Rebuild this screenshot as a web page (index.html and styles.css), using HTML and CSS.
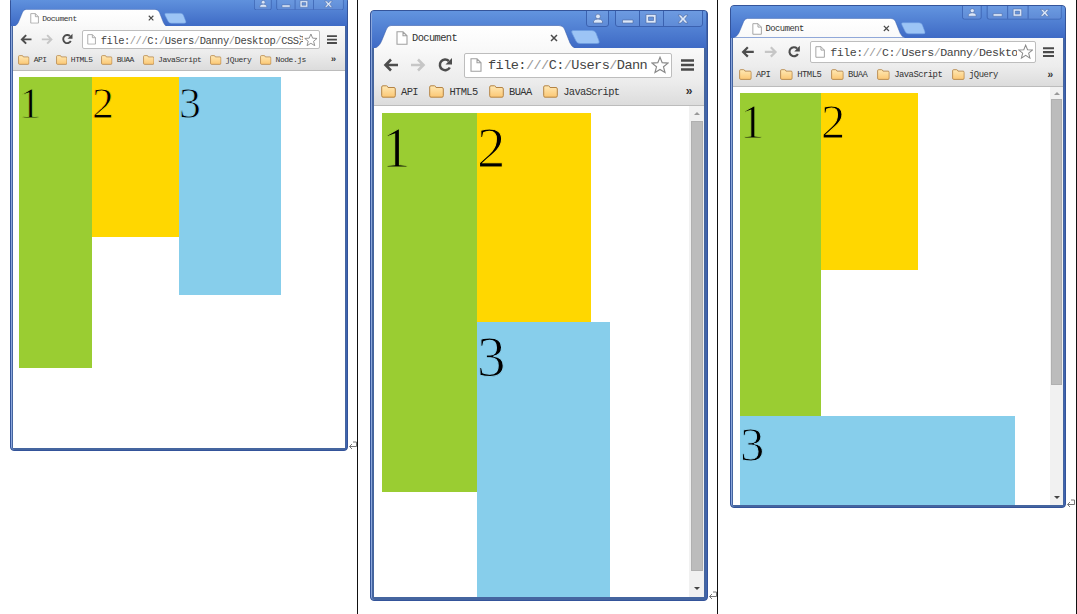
FILE: index.html
```html
<!DOCTYPE html>
<html lang="en">
<head>
<meta charset="utf-8">
<title>Document</title>
<link rel="stylesheet" href="styles.css">
</head>
<body>
<svg class="defs" aria-hidden="true">
  <defs>
    <linearGradient id="folderFill" x1="0" y1="0" x2="0" y2="1"><stop offset="0" stop-color="#ffe9b5"/><stop offset="1" stop-color="#fbc774"/></linearGradient>
    <linearGradient id="tabFill" x1="0" y1="0" x2="0" y2="1"><stop offset="0" stop-color="#ffffff"/><stop offset="1" stop-color="#f9f9f9"/></linearGradient>
  </defs>
  <symbol id="tab" viewBox="0 0 228 23">
    <path d="M0 23.5C4 22 6 20 8 15L12.500 4Q14 .5 17 .5H185Q189 .5 190.500 4L196 18Q198 22.500 202 23.500Z" fill="url(#tabFill)" stroke="#3c62ad" stroke-width=".6"/>
    <path d="M199 5.500H218Q221 5.500 222 8L225 16Q226 18.500 223 18.500H206Q203 18.500 202 16L198 8Q197 5.500 199 5.500Z" fill="#9cc4f5" stroke="#6f9de0" stroke-width=".7"/>
  </symbol>
  <symbol id="controls" viewBox="0 0 117 16">
    <path d="M.5 0V13Q.5 15.500 3 15.500H20Q22.500 15.500 22.500 13V0M29.500 0V13Q29.500 15.500 32 15.500H114Q116.500 15.500 116.500 13V0M53.500 0V15M77.500 0V15" fill="#ffffff12" stroke="#3b62b0"/>
    <g fill="#dbe7f9" stroke="#4a659c" stroke-width=".6">
      <circle cx="12" cy="5.500" r="2.400"/><path d="M7.500 12V10Q9 8 12 8T16.500 10V12Z"/>
      <path d="M36.500 9H47V12H36.500Z"/>
      <path fill-rule="evenodd" d="M60 3.500H70V12H60ZM62.500 6V9.500H67.500V6Z"/>
      <path d="M92 4H95L97 6.500 99 4H102L98.700 8 102 12H99L97 9.500 95 12H92L95.300 8Z"/>
    </g>
  </symbol>
  <symbol id="page" viewBox="0 0 12 14">
    <path d="M1 .8H7L11 4.800V13.200H1ZM7 .8V4.800H11" fill="#fff" stroke="#a0a0a0" stroke-width="1.100"/>
  </symbol>
  <symbol id="back" viewBox="0 0 16 14">
    <path d="M15 7H3M8 1.500L2.500 7L8 12.500" fill="none" stroke="currentColor" stroke-width="2.600"/>
  </symbol>
  <symbol id="reload" viewBox="0 0 16 16">
    <path d="M12.800 10.500A5.300 5.300 0 1 1 11.800 4" fill="none" stroke="#4d4d4d" stroke-width="2.500"/><path d="M15 1V7.500H8.500Z" fill="#4d4d4d"/>
  </symbol>
  <symbol id="star" viewBox="0 0 18 18">
    <path d="M9 1.300L11.200 6.700 17 7.100 12.500 10.800 14 16.500 9 13.400 4 16.500 5.500 10.800 1 7.100 6.800 6.700Z" fill="#fff" stroke="#8a8a8a" stroke-width="1.200"/>
  </symbol>
  <symbol id="folder" viewBox="0 0 15 13">
    <path d="M.7 10.700V2Q.7.8 2 .8H5.500Q6.500.8 7 2.500H13Q14.300 2.500 14.300 4V10.700Q14.300 12.200 13 12.200H2Q.7 12.200.7 10.700Z" fill="url(#folderFill)" stroke="#b48445" stroke-width="1"/>
  </symbol>
  <symbol id="close" viewBox="0 0 8 8"><path d="M1 1L7 7M7 1L1 7" stroke="#4b4b4b" stroke-width="1.500"/></symbol>
  <symbol id="menu" viewBox="0 0 13 12"><path d="M0 1.500H13M0 6H13M0 10.500H13" stroke="#4a4a4a" stroke-width="2.500"/></symbol>
  <symbol id="return" viewBox="0 0 10 9"><path d="M5 1H8.500V5.500H1.500M4 3L1.500 5.500L4 8" fill="none" stroke="#777"/></symbol>
</svg>

<main class="table">
  <section class="cell cell-a">
    <div class="window">
      <div class="titlebar">
        <svg class="tab-shape"><use href="#tab"/></svg>
        <div class="tab-label"><svg class="page-icon"><use href="#page"/></svg><span class="small">Document</span><svg class="tab-close"><use href="#close"/></svg></div>
        <svg class="controls"><use href="#controls"/></svg>
      </div>
      <div class="toolbar">
        <svg class="arrow"><use href="#back"/></svg><svg class="arrow forward"><use href="#back"/></svg><svg class="reload"><use href="#reload"/></svg>
        <div class="omnibox"><svg class="page-icon"><use href="#page"/></svg><span class="url">file:<i>///</i>C:<i>/</i>Users<i>/</i>Danny<i>/</i>Desktop<i>/</i>CSS浮</span><svg class="star"><use href="#star"/></svg></div>
        <svg class="menu"><use href="#menu"/></svg>
      </div>
      <div class="bookmarks small">
        <svg><use href="#folder"/></svg><span>API</span><svg><use href="#folder"/></svg><span>HTML5</span><svg><use href="#folder"/></svg><span>BUAA</span><svg><use href="#folder"/></svg><span>JavaScript</span><svg><use href="#folder"/></svg><span>jQuery</span><svg><use href="#folder"/></svg><span>Node.js</span><b class="more">»</b>
      </div>
      <div class="view"><div class="doc"><div class="box one">1</div><div class="box two">2</div><div class="box three">3</div></div></div>
    </div>
    <svg class="return"><use href="#return"/></svg>
  </section>

  <section class="cell cell-b">
    <div class="window">
      <div class="titlebar">
        <svg class="tab-shape"><use href="#tab"/></svg>
        <div class="tab-label"><svg class="page-icon"><use href="#page"/></svg><span class="small">Document</span><svg class="tab-close"><use href="#close"/></svg></div>
        <svg class="controls"><use href="#controls"/></svg>
      </div>
      <div class="toolbar">
        <svg class="arrow"><use href="#back"/></svg><svg class="arrow forward"><use href="#back"/></svg><svg class="reload"><use href="#reload"/></svg>
        <div class="omnibox"><svg class="page-icon"><use href="#page"/></svg><span class="url">file:<i>///</i>C:<i>/</i>Users<i>/</i>Dann</span><svg class="star"><use href="#star"/></svg></div>
        <svg class="menu"><use href="#menu"/></svg>
      </div>
      <div class="bookmarks small">
        <svg><use href="#folder"/></svg><span>API</span><svg><use href="#folder"/></svg><span>HTML5</span><svg><use href="#folder"/></svg><span>BUAA</span><svg><use href="#folder"/></svg><span>JavaScript</span><b class="more">»</b>
      </div>
      <div class="view"><div class="doc"><div class="box one">1</div><div class="box two">2</div><div class="box three">3</div></div>
        <div class="scrollbar"><i class="up"></i><div class="thumb"></div><i class="down"></i></div></div>
    </div>
    <svg class="return"><use href="#return"/></svg>
  </section>

  <section class="cell cell-c">
    <div class="window">
      <div class="titlebar">
        <svg class="tab-shape"><use href="#tab"/></svg>
        <div class="tab-label"><svg class="page-icon"><use href="#page"/></svg><span class="small">Document</span><svg class="tab-close"><use href="#close"/></svg></div>
        <svg class="controls"><use href="#controls"/></svg>
      </div>
      <div class="toolbar">
        <svg class="arrow"><use href="#back"/></svg><svg class="arrow forward"><use href="#back"/></svg><svg class="reload"><use href="#reload"/></svg>
        <div class="omnibox"><svg class="page-icon"><use href="#page"/></svg><span class="url">file:<i>///</i>C:<i>/</i>Users<i>/</i>Danny<i>/</i>Deskto</span><svg class="star"><use href="#star"/></svg></div>
        <svg class="menu"><use href="#menu"/></svg>
      </div>
      <div class="bookmarks small">
        <svg><use href="#folder"/></svg><span>API</span><svg><use href="#folder"/></svg><span>HTML5</span><svg><use href="#folder"/></svg><span>BUAA</span><svg><use href="#folder"/></svg><span>JavaScript</span><svg><use href="#folder"/></svg><span>jQuery</span><b class="more">»</b>
      </div>
      <div class="view"><div class="doc"><div class="box one">1</div><div class="box two">2</div><div class="box three">3</div></div>
        <div class="scrollbar"><i class="up"></i><div class="thumb"></div><i class="down"></i></div></div>
    </div>
    <svg class="return"><use href="#return"/></svg>
  </section>
</main>
</body>
</html>
```
FILE: styles.css
```css
* { box-sizing: border-box; }
body { margin: 0; background: #fff; overflow: hidden; }
svg { display: block; flex: none; }
i { font-style: normal; }
.defs { position: absolute; width: 0; height: 0; }

.table { display: grid; grid-template-columns: 358px 360px 359px; height: 614px; overflow: hidden; }
.cell { display: flex; align-items: flex-start; border-right: 1px solid #111; min-width: 0; overflow: hidden; }

/* --u is one chrome unit; each window is drawn at its own zoom. */
.cell-a { --u: .768px; padding-left: 10px; }
.cell-b { --u: 1px; padding: 10px 0 0 12px; }
.cell-c { --u: .853px; padding: 5px 0 0 12px; }

.window {
  display: flex; flex-direction: column; flex: none; overflow: hidden;
  border: 1px solid #34549a; border-radius: 4px;
  background: #45659f;
  box-shadow: inset 1px 0 #8ba7dc, inset -1px 0 #4065b0;
  padding: 0 2px 2px;
}
.cell-a .window { width: 338px; height: 454px; margin-top: -3px; }
.cell-b .window { width: 338px; height: 591px; padding: 0 3px 3px; }
.cell-c .window { width: 336px; height: 503px; }

.titlebar {
  height: calc(37 * var(--u)); flex: none; margin: 0 -2px; padding: 0 2px;
  background: linear-gradient(#6294df, #3e6ac5);
  display: grid; grid-template-columns: 1fr;
}
.tab-shape { grid-area: 1 / 1; width: calc(228 * var(--u)); height: calc(23 * var(--u)); align-self: end; }
.tab-label {
  grid-area: 1 / 1; justify-self: start; align-self: end; display: flex; align-items: center;
  width: calc(183.5 * var(--u)); height: calc(21 * var(--u)); padding-left: calc(22 * var(--u));
}
.page-icon { width: calc(12 * var(--u)); height: calc(14 * var(--u)); }
.tab-label .small { margin-left: calc(4 * var(--u)); }
.tab-close { width: calc(8 * var(--u)); height: calc(8 * var(--u)); margin-left: auto; }
.controls { grid-area: 1 / 1; justify-self: end; width: calc(117 * var(--u)); height: calc(16 * var(--u)); margin-right: 1px; }

.small {
  font: calc(10.4 * var(--u)) "Liberation Mono", monospace;
  letter-spacing: calc(-.6 * var(--u)); color: #333; white-space: nowrap;
}
.toolbar {
  height: calc(34 * var(--u)); flex: none; display: flex; align-items: center;
  background: linear-gradient(#f9f9f9, #ececec); padding: 0 calc(10 * var(--u)) 0 calc(9 * var(--u));
}
.arrow { width: calc(16 * var(--u)); height: calc(14 * var(--u)); color: #4d4d4d; }
.forward { color: #c6c6c6; transform: scaleX(-1); margin-left: calc(11 * var(--u)); }
.reload { width: calc(16 * var(--u)); height: calc(16 * var(--u)); margin-left: calc(11 * var(--u)); }
.omnibox {
  flex: 1; min-width: 0; display: flex; align-items: center; height: calc(25 * var(--u));
  margin: 0 calc(9 * var(--u)) 0 calc(11 * var(--u)); padding: 0 calc(2 * var(--u)) 0 calc(5 * var(--u));
  border: 1px solid #bdbdbd; border-radius: 2px; background: #fff;
}
.url {
  flex: 1; min-width: 0; overflow: hidden; white-space: nowrap; margin: 0 calc(1 * var(--u)) 0 calc(6 * var(--u));
  font: calc(13.6 * var(--u)) "Liberation Mono", "Noto Sans CJK SC", monospace;
  letter-spacing: calc(-.58 * var(--u)); color: #444;
}
.url i { color: #999; }
.star { width: calc(18 * var(--u)); height: calc(18 * var(--u)); }
.menu { width: calc(13 * var(--u)); height: calc(12 * var(--u)); }

.bookmarks {
  height: calc(24 * var(--u)); flex: none; display: flex; align-items: center;
  padding: 0 calc(12 * var(--u)) calc(4 * var(--u)) calc(7 * var(--u));
  background: linear-gradient(#ececec, #dcdcdc); border-bottom: 1px solid #bcbcbc;
}
.bookmarks svg { width: calc(15 * var(--u)); height: calc(13 * var(--u)); }
.bookmarks span { margin: 0 calc(11.5 * var(--u)) 0 calc(5 * var(--u)); }
.more { margin-left: auto; font-size: calc(12 * var(--u)); }

.view { flex: 1; min-height: 0; display: flex; background: #fff; overflow: hidden; }
.doc { flex: 1; min-width: 0; overflow: hidden; }
.cell-a .doc { padding: 6px; }
.cell-b .doc { padding: 7px 8px 0; }
.cell-c .doc { padding: 6px 7px 0; }
/* A stroke in the box colour slims the numerals. */
.box {
  float: left; color: #000; background: var(--fill);
  font: calc(57 * var(--u)) / calc(69 * var(--u)) "Liberation Serif", serif;
  -webkit-text-stroke: calc(1.1 * var(--u)) var(--fill);
}
.one { --fill: #9acd32; }
.two { --fill: #ffd700; }
.three { --fill: #87ceeb; }
.cell-a .one { width: 73px; height: 291px; }
.cell-a .two { width: 87px; height: 160px; }
.cell-a .three { width: 102px; height: 218px; }
.cell-b .one { width: 95px; height: 379px; }
.cell-b .two { width: 114px; height: 209px; }
.cell-b .three { width: 133px; height: 300px; }
.cell-c .one { width: 81px; height: 323px; }
.cell-c .two { width: 97px; height: 177px; }
.cell-c .three { width: 275px; height: 120px; clear: both; }

.scrollbar {
  width: 15px; flex: none; background: #f1f1f1;
  display: flex; flex-direction: column; align-items: center;
}
.cell-c .scrollbar { width: 13px; }
.thumb { width: calc(12 * var(--u)); background: #bcbcbc; border: 1px solid #b0b0b0; }
.cell-b .thumb { height: 450px; }
.cell-c .thumb { height: 286px; }
.up, .down { border: 3.5px solid transparent; }
.up { border-top: 0; border-bottom-color: #999; margin: calc(6 * var(--u)) 0 6px; }
.cell-c .up { margin-bottom: 4px; }
.down { border-bottom: 0; border-top-color: #444; margin: auto 0 calc(7 * var(--u)); }

.return { width: 10px; height: 9px; }
.cell-a .return { margin-top: 441px; }
.cell-b .return { margin-top: 581px; }
.cell-c .return { margin-top: 494px; }
```
